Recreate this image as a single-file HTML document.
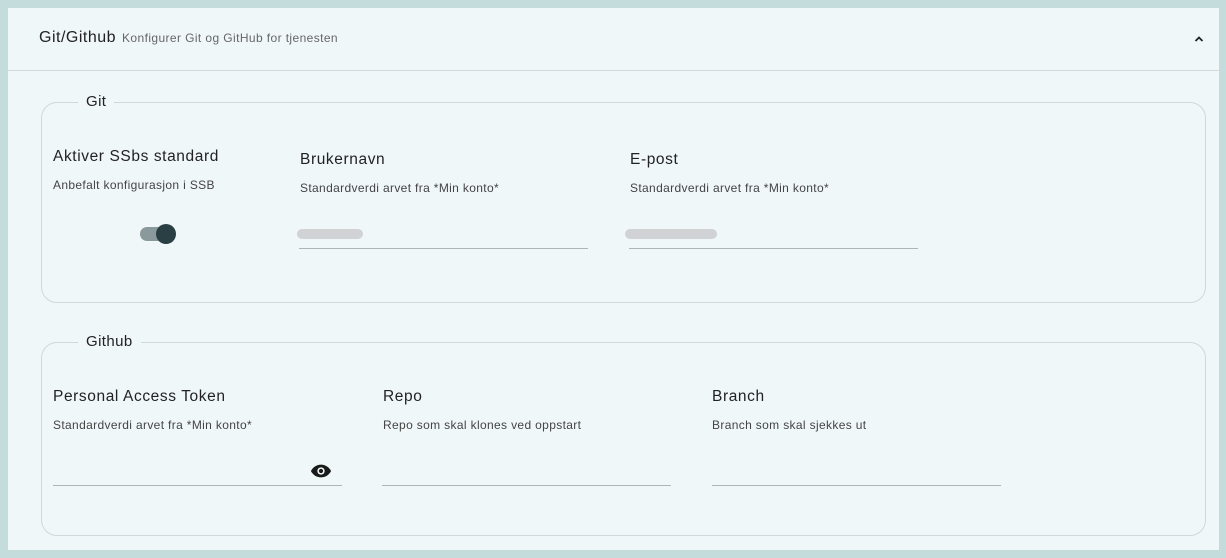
<!DOCTYPE html><html><head><style>
body{margin:0;width:1226px;height:558px;background:#c4dcdc;font-family:"Liberation Sans",sans-serif;overflow:hidden;position:relative;color:#1a1a1a}
.card{position:absolute;left:8px;top:8px;width:1211px;height:542px;background:#f0f7f9}
.hdr{position:absolute;left:0;top:0;width:100%;height:62px;border-bottom:1px solid #d4d8d8}
.t{position:absolute;left:31px;top:21px;font-size:16px;letter-spacing:0.5px;color:#222}
.t small{font-size:12px;letter-spacing:0.4px;color:#666;margin-left:6px}
.fs{position:absolute;left:33px;width:1163px;border:1px solid #d2d8d8;border-radius:16px}
.lg{position:absolute;top:-10px;left:36px;padding:0 8px;background:#f0f7f9;font-size:15px;letter-spacing:0.4px;color:#222}
.l{position:absolute;font-size:15.5px;letter-spacing:0.6px;color:#222}
.s{position:absolute;font-size:12px;letter-spacing:0.35px;color:#444}
.u{position:absolute;height:1px;background:#b0b4b6;width:289px}
.blur{position:absolute;height:10px;background:#d0d2d4;border-radius:5px}
</style></head><body><div class="card">
<div class="hdr"><div class="t">Git/Github<small>Konfigurer Git og GitHub for tjenesten</small></div>
<svg style="position:absolute;left:1185px;top:26px" width="12" height="10"><path d="M2.5 7L6 3.5L9.5 7" stroke="#222" stroke-width="1.8" fill="none"/></svg></div>
<div class="fs" style="top:94px;height:199px"><div class="lg">Git</div></div>
<div class="fs" style="top:334px;height:192px"><div class="lg">Github</div></div>
<div class="l" style="left:45px;top:140px">Aktiver SSbs standard</div>
<div class="s" style="left:45px;top:170px">Anbefalt konfigurasjon i SSB</div>
<div style="position:absolute;left:132px;top:219px;width:30px;height:14px;border-radius:7px;background:#8a9a9c"></div>
<div style="position:absolute;left:148px;top:216px;width:20px;height:20px;border-radius:10px;background:#2a3f44"></div>
<div class="l" style="left:292px;top:143px">Brukernavn</div>
<div class="s" style="left:292px;top:173px">Standardverdi arvet fra *Min konto*</div>
<div class="blur" style="left:289px;top:221px;width:66px"></div>
<div class="u" style="left:291px;top:240px"></div>
<div class="l" style="left:622px;top:143px">E-post</div>
<div class="s" style="left:622px;top:173px">Standardverdi arvet fra *Min konto*</div>
<div class="blur" style="left:617px;top:221px;width:92px"></div>
<div class="u" style="left:621px;top:240px"></div>
<div class="l" style="left:45px;top:380px">Personal Access Token</div>
<div class="s" style="left:45px;top:410px">Standardverdi arvet fra *Min konto*</div>
<svg style="position:absolute;left:302px;top:455px" width="22" height="16" viewBox="0 0 24 16"><path d="M12 1C7 1 3 4 1 8c2 4 6 7 11 7s9-3 11-7c-2-4-6-7-11-7z" fill="#1a1a1a"/><circle cx="12" cy="8" r="4" fill="#f0f7f9"/><circle cx="12" cy="8" r="2.3" fill="#1a1a1a"/></svg>
<div class="u" style="left:45px;top:477px"></div>
<div class="l" style="left:375px;top:380px">Repo</div>
<div class="s" style="left:375px;top:410px">Repo som skal klones ved oppstart</div>
<div class="u" style="left:374px;top:477px"></div>
<div class="l" style="left:704px;top:380px">Branch</div>
<div class="s" style="left:704px;top:410px">Branch som skal sjekkes ut</div>
<div class="u" style="left:704px;top:477px"></div>
</div></body></html>
